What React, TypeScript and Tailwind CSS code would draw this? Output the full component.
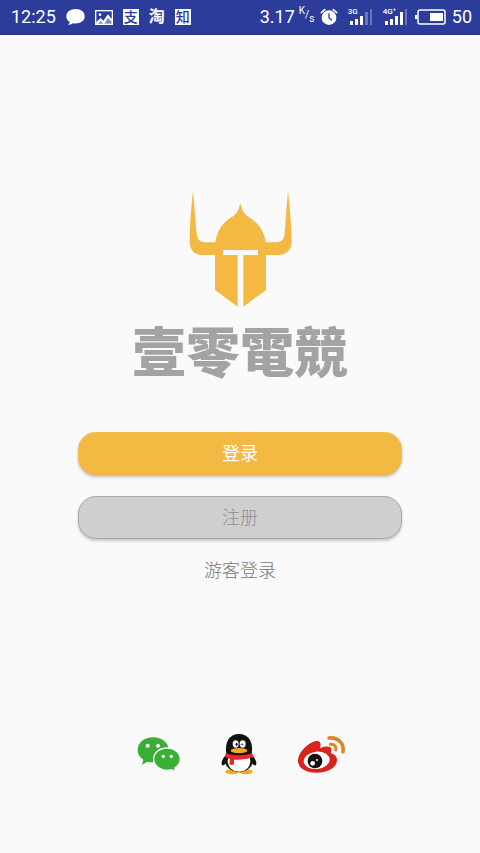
import type { ReactNode } from "react";

function ChatIcon() {
  return (
    <svg viewBox="0 0 57 48" className="h-4 w-[19px]" fill="#fff" aria-hidden="true">
      <path d="M29 0C13 0 1 9 1 22c0 8 4 14 10 17 0 4-2 6-6 8 6 1 12 0 15-4 21 3 36-6 36-21C56 9 45 0 29 0Z" />
    </svg>
  );
}

function PhotoIcon() {
  return (
    <svg viewBox="0 0 54 45" className="h-[15px] w-[18px]" aria-hidden="true">
      <rect x="2" y="2" width="50" height="41" fill="none" stroke="#fff" strokeWidth="4" />
      <circle cx="15" cy="14" r="4" fill="#fff" />
      <path d="M4 36 17 24l8 8 14-19 13 17v7L39 24 27 43 17 33 8 42H4Z" fill="#fff" />
      <path d="M6 38 17 28l8 8 14-19 12 16v10H6Z" fill="#fff" opacity="0.4" />
    </svg>
  );
}

function AppBadge({ children }: { children: ReactNode }) {
  return (
    <span className="flex size-4 items-center justify-center overflow-hidden bg-white text-[14px] leading-4 font-medium text-[#2c3c9a]">
      {children}
    </span>
  );
}

function AlarmIcon() {
  return (
    <svg viewBox="0 0 54 54" className="size-[18px]" fill="none" aria-hidden="true">
      <circle cx="27" cy="29" r="22" fill="#fff" />
      <path d="M4 14 14 5M50 14 40 5" stroke="#fff" strokeWidth="5" strokeLinecap="round" />
      <path d="M27 16v14l9 7" stroke="#2c3c9a" strokeWidth="4" />
    </svg>
  );
}

function Signal({ label, strong }: { label: string; strong: boolean }) {
  return (
    <span className="relative block h-[18px] w-[25px]">
      <svg viewBox="0 0 25 18" className="h-[18px] w-[25px]" fill="#fff" aria-hidden="true">
        <rect x="2" y="13" width="3" height="4" />
        <rect x="7" y="11" width="3" height="6" />
        <rect x="12" y="8" width="3" height="9" />
        <rect x="17" y="4" width="3" height="13" opacity={strong ? 1 : 0.3} />
        <rect x="22" y="1" width="2" height="16" opacity="0.3" />
      </svg>
      <span className="absolute top-0 left-0 text-[8px] leading-2 font-medium">{label}</span>
    </span>
  );
}

function BatteryIcon() {
  return (
    <svg viewBox="0 0 31 16" className="h-4 w-[31px]" fill="none" aria-hidden="true">
      <rect x="3" y="1" width="27" height="14" rx="2" stroke="#fff" strokeWidth="1.5" />
      <path d="M1 6v4" stroke="#fff" strokeWidth="2" />
      <rect x="15" y="4" width="13" height="8" fill="#fff" />
    </svg>
  );
}

function StatusBar() {
  return (
    <header className="flex h-[35px] items-center justify-between border-b border-[#26307c] bg-[#2c3c9a] pr-2 pl-[11px] text-[18px] leading-6 text-white">
      <div className="flex items-center gap-[10px]">
        <span>12:25</span>
        <ChatIcon />
        <PhotoIcon />
        <AppBadge>支</AppBadge>
        <span className="flex w-4 justify-center text-[16px] leading-4 font-bold">淘</span>
        <AppBadge>知</AppBadge>
      </div>
      <div className="flex items-center">
        <span>3.17</span>
        <span className="ml-1 flex w-[14px] text-[10px] leading-3">
          <span className="-mt-1">K</span>
          <span>/</span>
          <span className="mt-1">s</span>
        </span>
        <span className="ml-[7px]"><AlarmIcon /></span>
        <span className="ml-[10px]"><Signal label="3G" strong={false} /></span>
        <span className="ml-[10px]"><Signal label="4G⁺" strong /></span>
        <span className="ml-[7px]"><BatteryIcon /></span>
        <span className="ml-[6px]">50</span>
      </div>
    </header>
  );
}

function HelmetLogo() {
  return (
    <svg viewBox="39 33 312 360" className="h-[120px] w-[104px]" fill="#f4b942" aria-hidden="true">
      <path d="M54 35C48 90 44 140 44 185Q44 228 84 228H120V333L188 383V228H144V213H249V228H205V383L273 333V228H308Q350 226 350 185C350 140 344 85 339 35C334 90 332 130 329 165Q326 190 305 190H272C268 150 240 125 220 113C205 104 200 90 196 73C192 90 187 104 172 113C150 125 126 150 121 190H88Q68 190 65 165C62 130 59 90 54 35Z" />
    </svg>
  );
}

function WeChatIcon() {
  return (
    <svg viewBox="36 33 132 108" className="h-9 w-11" aria-hidden="true">
      <path d="M84 37C58 37 38 53 38 75c0 13 7 22 17 29l-4 15 17-9c5 2 11 2 16 2 26 0 47-15 47-37S110 37 84 37Z" fill="#3aae35" />
      <path d="M126 69c-22 0-40 14-40 33s18 34 40 34c5 0 9-1 13-2l13 6-3-11c10-6 17-15 17-27 0-19-18-33-40-33Z" fill="#3aae35" stroke="#fafafa" strokeWidth="4" />
      <g fill="#fff">
        <circle cx="68" cy="62" r="6" />
        <circle cx="99" cy="62" r="6" />
        <circle cx="115" cy="94" r="5" />
        <circle cx="139" cy="94" r="5" />
      </g>
    </svg>
  );
}

function QQIcon() {
  return (
    <svg viewBox="36 21 108 126" className="h-[42px] w-9" aria-hidden="true">
      <path d="M56 82C46 90 37 104 38 114c1 7 7 5 14-4M124 82c10 8 19 22 18 32-1 7-7 5-14-4" fill="#111" />
      <ellipse cx="70" cy="137" rx="21" ry="8" fill="#f7a81b" />
      <ellipse cx="110" cy="137" rx="21" ry="8" fill="#f7a81b" />
      <ellipse cx="90" cy="103" rx="42" ry="35" fill="#111" />
      <ellipse cx="90" cy="106" rx="34" ry="31" fill="#fff" />
      <path d="M52 84C46 48 61 24 90 24s44 24 38 60l-12 10H64Z" fill="#111" />
      <ellipse cx="80" cy="54" rx="9" ry="11" fill="#fff" />
      <ellipse cx="101" cy="54" rx="9" ry="11" fill="#fff" />
      <ellipse cx="83" cy="55" rx="3" ry="5" fill="#111" />
      <path d="M95 57q4-7 8 0" fill="none" stroke="#111" strokeWidth="3" />
      <ellipse cx="90" cy="74" rx="25" ry="8" fill="#f7a81b" />
      <path d="M50 82q40 12 80 0l3 12q-26 9-58 7v14q-6 4-14 0l2-16-15-6Z" fill="#e5282a" />
    </svg>
  );
}

function WeiboIcon() {
  return (
    <svg viewBox="24 30 147 117" className="h-[39px] w-[49px]" aria-hidden="true">
      <path d="M78 49c15-5 20 5 15 20 14-6 32-7 34 3 1 6-3 9-1 13 10 3 18 9 18 20 0 23-27 38-62 38-33 0-55-14-55-36 0-24 28-52 51-58Z" fill="#d9231c" />
      <ellipse cx="83" cy="106" rx="39" ry="26" fill="#fff" transform="rotate(-6 83 106)" />
      <circle cx="78" cy="108" r="22" fill="#111" />
      <circle cx="71" cy="115" r="7" fill="#fff" />
      <circle cx="84" cy="105" r="3" fill="#fff" />
      <path d="M120 39c26-3 46 15 42 41" fill="none" stroke="#e08522" strokeWidth="11" strokeLinecap="round" />
      <path d="M124 58c12-1 19 6 16 17" fill="none" stroke="#e08522" strokeWidth="9" strokeLinecap="round" />
    </svg>
  );
}

export default function App() {
  return (
    <div className="flex min-h-screen flex-col bg-[#fafafa] font-[Roboto,'Noto_Sans_CJK_SC',sans-serif]">
      <StatusBar />
      <main className="flex flex-1 flex-col items-center px-[78px] pt-[155px]">
        <HelmetLogo />
        <h1 className="mt-[6px] font-['Noto_Sans_CJK_TC',sans-serif] text-[54px] leading-[68px] font-black whitespace-nowrap text-[#a3a3a3]">
          壹零電競
        </h1>
        <button
          type="button"
          className="mt-12 h-[43px] w-full rounded-[18px] bg-[#f4b942] text-[18px] text-white shadow-[0_2px_3px_rgba(0,0,0,0.25)]"
        >
          登录
        </button>
        <button
          type="button"
          className="mt-[21px] h-[43px] w-full rounded-[18px] border border-[#a9a9a9] bg-[#cfcfcf] text-[18px] font-light text-[#8f8f8f] shadow-[0_2px_3px_rgba(0,0,0,0.2)]"
        >
          注册
        </button>
        <button type="button" className="mt-[18px] text-[18px] leading-7 font-light text-[#777]">
          游客登录
        </button>
        <div className="mt-auto flex items-center gap-10 pb-[78px] pl-[2px]">
          <button type="button" aria-label="微信"><WeChatIcon /></button>
          <button type="button" aria-label="QQ"><QQIcon /></button>
          <button type="button" aria-label="微博"><WeiboIcon /></button>
        </div>
      </main>
    </div>
  );
}
